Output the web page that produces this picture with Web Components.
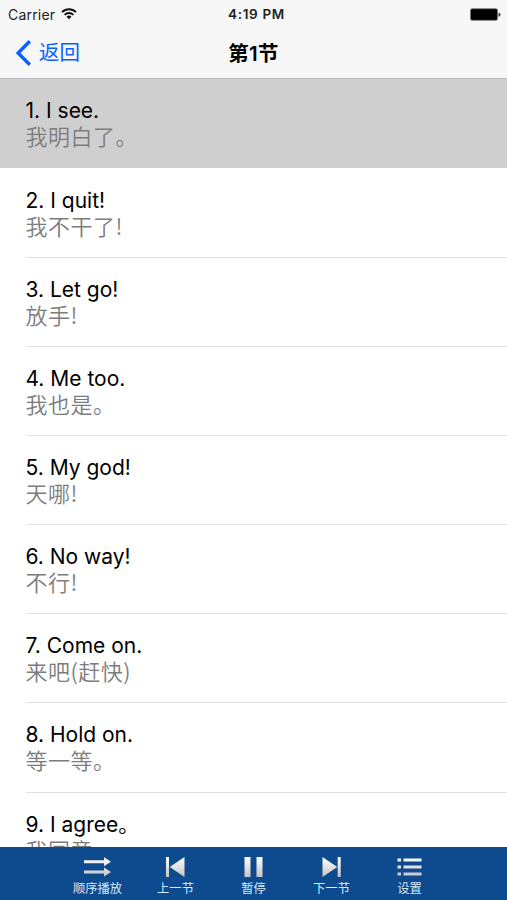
<!DOCTYPE html>
<html lang="zh-CN">
<head>
<meta charset="utf-8">
<meta name="viewport" content="width=device-width, initial-scale=1">
<title>第1节</title>
<style>
    body {
        margin: 0;
        font-family: Inter, "Noto Sans CJK SC", sans-serif;
        background: #fff;
    }
</style>
</head>
<body>
<lesson-app></lesson-app>

<script>
class StatusBar extends HTMLElement {
    constructor() {
        super();
        this.attachShadow({ mode: 'open' });
    }

    connectedCallback() {
        this.shadowRoot.innerHTML = `
            <style>
                :host {
                    display: grid;
                    grid-template-columns: 1fr auto 1fr;
                    align-items: center;
                    height: 27px;
                    padding: 0 6px 0 8px;
                    box-sizing: border-box;
                    font-size: 14px;
                    line-height: 27px;
                    color: #222;
                }

                .carrier {
                    display: flex;
                    align-items: center;
                    gap: 6px;
                    letter-spacing: .2px;
                }

                .time {
                    font-size: 13.5px;
                    font-weight: 600;
                    letter-spacing: .65px;
                    padding: 1px 0 0 4px;
                }

                .battery {
                    justify-self: end;
                }

                svg {
                    display: block;
                }
            </style>
            <div class="carrier">
                <span>Carrier</span>
                <svg width="16" height="13" viewBox="0 0 16 12" fill="none" stroke="#111" stroke-width="1.9">
                    <path d="M1 3.6a10 10 0 0 1 14 0M3.6 6.3a6.2 6.2 0 0 1 8.8 0"/>
                    <path d="M8 10.7 5.5 8.2a3.6 3.6 0 0 1 5 0z" fill="#111" stroke="none"/>
                </svg>
            </div>
            <div class="time">4:19 PM</div>
            <svg class="battery" width="31" height="13" viewBox="0 0 31 13">
                <rect x=".5" y=".7" width="27" height="11.6" rx="1.6" fill="#000" stroke="#777" stroke-width=".8"/>
                <path d="M28.5 4.8a2 2 0 0 1 0 4z" fill="#333"/>
            </svg>
        `;
    }
}

class NavBar extends HTMLElement {
    constructor() {
        super();
        this.attachShadow({ mode: 'open' });
    }

    connectedCallback() {
        this.shadowRoot.innerHTML = `
            <style>
                :host {
                    display: grid;
                    grid-template-columns: 1fr auto 1fr;
                    align-items: center;
                    height: 52px;
                    padding: 1px 15px 0 15px;
                    box-sizing: border-box;
                    border-bottom: 1px solid #bcbcbc;
                }

                .back {
                    display: flex;
                    align-items: center;
                    gap: 8px;
                    padding: 0;
                    border: none;
                    background: none;
                    font: inherit;
                    font-size: 20.5px;
                    line-height: 30px;
                    color: #0a60ff;
                }

                .title {
                    padding-top: 1px;
                    font-size: 20.5px;
                    font-weight: 600;
                    line-height: 30px;
                    letter-spacing: .2px;
                    color: #000;
                }
            </style>
            <button class="back">
                <svg width="16" height="26" viewBox="0 0 16 26" fill="none" stroke="#0a60ff" stroke-width="3.4">
                    <path d="M14.8 1.2 3.1 13l11.7 11.8"/>
                </svg>
                <slot name="back"></slot>
            </button>
            <div class="title"><slot></slot></div>
        `;
    }
}

class PhraseRow extends HTMLElement {
    constructor() {
        super();
        this.attachShadow({ mode: 'open' });
    }

    connectedCallback() {
        this.shadowRoot.innerHTML = `
            <style>
                :host {
                    display: block;
                    height: 89.15px;
                    padding-left: 25.5px;
                    box-sizing: border-box;
                }

                :host([selected]) {
                    height: 88.65px;
                    margin-bottom: .5px;
                    background: #cfcfcf;
                }

                .body {
                    height: 100%;
                    padding-top: 19px;
                    box-sizing: border-box;
                    border-bottom: 1px solid #e0e0e0;
                }

                :host([selected]) .body {
                    border-color: transparent;
                }

                .phrase {
                    font-size: 21px;
                    line-height: 25px;
                    color: #000;
                }

                .meaning {
                    font-family: "Noto Sans CJK SC", sans-serif;
                    font-size: 22px;
                    font-weight: 350;
                    line-height: 24px;
                    letter-spacing: .5px;
                    color: #7c7c7c;
                }
            </style>
            <div class="body">
                <div class="phrase"><slot name="phrase"></slot></div>
                <div class="meaning"><slot name="meaning"></slot></div>
            </div>
        `;
    }
}

class ToolButton extends HTMLElement {
    constructor() {
        super();
        this.attachShadow({ mode: 'open' });
    }

    connectedCallback() {
        const icons = {
            order: '<path d="M1 7.2h20V4.2l7 4.5-7 4.5v-3H1zM1 17.6h20v-3l7 4.5-7 4.5v-3H1z"/>',
            prev: '<path d="M5 4h3v20H5zM23.5 4v20L8.7 14z"/>',
            pause: '<path d="M5.5 4h6v20h-6zM17.5 4h6v20h-6z"/>',
            next: '<path d="M5.5 4v20l14.8-10zM20.7 4h3v20h-3z"/>',
            list: '<path d="M2.5 5.5H6v3H2.5zM8.5 5.5h18v3h-18zM2.5 12.5H6v3H2.5zM8.5 12.5h18v3h-18zM2.5 19.5H6v3H2.5zM8.5 19.5h18v3h-18z"/>'
        };

        this.shadowRoot.innerHTML = `
            <style>
                :host {
                    display: flex;
                    flex-direction: column;
                    align-items: center;
                    width: 78px;
                    padding-top: 6px;
                    box-sizing: border-box;
                    font-size: 12.3px;
                    line-height: 16px;
                    color: #d5ebff;
                }

                svg {
                    display: block;
                    height: 28px;
                }
            </style>
            <svg width="29" height="28" viewBox="0 0 29 28" fill="url(#metal)">
                <defs>
                    <linearGradient id="metal" gradientUnits="userSpaceOnUse" x1="0" y1="4" x2="0" y2="24">
                        <stop offset="0" stop-color="#fff"/>
                        <stop offset="1" stop-color="#c4c4c4"/>
                    </linearGradient>
                </defs>
                ${icons[this.getAttribute('icon')]}
            </svg>
            <slot></slot>
        `;
    }
}

class PlayerBar extends HTMLElement {
    constructor() {
        super();
        this.attachShadow({ mode: 'open' });
    }

    connectedCallback() {
        this.shadowRoot.innerHTML = `
            <style>
                :host {
                    display: flex;
                    justify-content: center;
                    height: 53.5px;
                    background: #0d4a8e;
                }
            </style>
            <tool-button icon="order">顺序播放</tool-button>
            <tool-button icon="prev">上一节</tool-button>
            <tool-button icon="pause">暂停</tool-button>
            <tool-button icon="next">下一节</tool-button>
            <tool-button icon="list">设置</tool-button>
        `;
    }
}

class LessonApp extends HTMLElement {
    constructor() {
        super();
        this.attachShadow({ mode: 'open' });
        this.phrases = [
            ['I see.', '我明白了。'],
            ['I quit!', '我不干了!'],
            ['Let go!', '放手!'],
            ['Me too.', '我也是。'],
            ['My god!', '天哪!'],
            ['No way!', '不行!'],
            ['Come on.', '来吧(赶快)'],
            ['Hold on.', '等一等。'],
            ['I agree。', '我同意。']
        ];
    }

    connectedCallback() {
        this.shadowRoot.innerHTML = `
            <style>
                :host {
                    display: flex;
                    flex-direction: column;
                    height: 900px;
                    overflow: hidden;
                }

                header {
                    flex: none;
                    height: 79.4px;
                    background: #f7f7f7;
                }

                main {
                    flex: 1;
                    min-height: 0;
                    overflow: hidden;
                }

                player-bar {
                    flex: none;
                }
            </style>
            <header>
                <status-bar></status-bar>
                <nav-bar><span slot="back">返回</span>第1节</nav-bar>
            </header>
            <main>
                ${this.phrases.map(([phrase, meaning], i) => `
                    <phrase-row ${i === 0 ? 'selected' : ''}>
                        <span slot="phrase">${i + 1}. ${phrase}</span>
                        <span slot="meaning">${meaning}</span>
                    </phrase-row>
                `).join('')}
            </main>
            <player-bar></player-bar>
        `;
    }
}

// Define the custom elements
customElements.define('status-bar', StatusBar);
customElements.define('nav-bar', NavBar);
customElements.define('phrase-row', PhraseRow);
customElements.define('tool-button', ToolButton);
customElements.define('player-bar', PlayerBar);
customElements.define('lesson-app', LessonApp);
</script>
</body>
</html>
